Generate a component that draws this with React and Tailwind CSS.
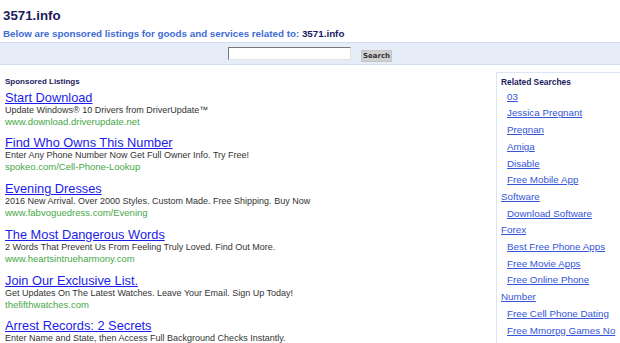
import React from 'react';

const ads = [
  {
    title: 'Start Download',
    desc: 'Update Windows® 10 Drivers from DriverUpdate™',
    url: 'www.download.driverupdate.net',
  },
  {
    title: 'Find Who Owns This Number',
    desc: 'Enter Any Phone Number Now Get Full Owner Info. Try Free!',
    url: 'spokeo.com/Cell-Phone-Lookup',
  },
  {
    title: 'Evening Dresses',
    desc: '2016 New Arrival. Over 2000 Styles. Custom Made. Free Shipping. Buy Now',
    url: 'www.fabvoguedress.com/Evening',
  },
  {
    title: 'The Most Dangerous Words',
    desc: '2 Words That Prevent Us From Feeling Truly Loved. Find Out More.',
    url: 'www.heartsintrueharmony.com',
  },
  {
    title: 'Join Our Exclusive List.',
    desc: 'Get Updates On The Latest Watches. Leave Your Email. Sign Up Today!',
    url: 'thefifthwatches.com',
  },
  {
    title: 'Arrest Records: 2 Secrets',
    desc: 'Enter Name and State, then Access Full Background Checks Instantly.',
    url: 'www.instantcheckmate.com',
  },
];

// sub = indented link, otherwise it is the wrapped tail of the line above
const related = [
  { text: '03', sub: true },
  { text: 'Jessica Pregnant', sub: true },
  { text: 'Pregnan', sub: true },
  { text: 'Amiga', sub: true },
  { text: 'Disable', sub: true },
  { text: 'Free Mobile App', sub: true },
  { text: 'Software', sub: false },
  { text: 'Download Software', sub: true },
  { text: 'Forex', sub: false },
  { text: 'Best Free Phone Apps', sub: true },
  { text: 'Free Movie Apps', sub: true },
  { text: 'Free Online Phone', sub: true },
  { text: 'Number', sub: false },
  { text: 'Free Cell Phone Dating', sub: true },
  { text: 'Free Mmorpg Games No', sub: true },
];

export default function App() {
  return (
    <div className="w-[620px] h-[343px] overflow-hidden bg-white font-['Liberation_Sans',Arial,sans-serif]">
      {/* Header */}
      <div className="pt-[8px] pl-[3px]">
        <h1 className="text-[13.3px] leading-[15px] font-bold text-[#1b1b5e]">3571.info</h1>
        <p className="mt-[5px] text-[9.8px] leading-[11px] font-bold text-[#3e6bd6] whitespace-nowrap">
          Below are sponsored listings for goods and services related to:{' '}
          <span className="text-[#1b1b5e]">3571.info</span>
        </p>
      </div>

      {/* Search bar */}
      <div className="mt-[2.5px] h-[23px] border-y border-[#d3ddf2] bg-[#e6edf9] flex items-center justify-center gap-[10px]">
        <input
          type="text"
          className="w-[123px] h-[13px] bg-white border border-t-[#7a7a7a] border-l-[#7a7a7a] border-b-[#e2e2e2] border-r-[#e2e2e2] outline-none"
        />
        <button className="mt-[5px] w-[31px] h-[12px] bg-[#d0d0d0] border border-[#c4c4c4] text-[7px] leading-[10px] font-bold text-[#333] font-['DejaVu_Sans',sans-serif]">
          Search
        </button>
      </div>

      {/* Body */}
      <div className="mt-[7px] flex">
        <div className="flex-1 pl-[5px] pt-[5px]">
          <h2 className="text-[8px] leading-[10px] font-bold text-[#1b1b5e] mb-[3px]">Sponsored Listings</h2>
          {ads.map((ad) => (
            <div key={ad.title} className="mb-[8.8px] whitespace-nowrap">
              <a href="#" className="block text-[12.8px] leading-[15px] text-[#1c1cea] underline">
                {ad.title}
              </a>
              <div className="text-[9px] leading-[11px] text-[#333]">{ad.desc}</div>
              <div className="text-[9.5px] leading-[11px] text-[#47a847]">{ad.url}</div>
            </div>
          ))}
        </div>

        <div className="w-[124px] shrink-0 border border-r-0 border-[#dce5f6] pl-[4px] pt-[4px] h-[300px]">
          <h2 className="text-[8.4px] leading-[10px] font-bold text-[#1b1b5e] mb-[2.2px]">Related Searches</h2>
          <ul>
            {related.map((r) => (
              <li
                key={r.text}
                className={r.sub ? 'pl-[6px] text-[9.8px] leading-[16.7px] whitespace-nowrap' : 'text-[9.8px] leading-[16.7px] whitespace-nowrap'}
              >
                <a href="#" className="text-[#3556d8] underline">
                  {r.text}
                </a>
              </li>
            ))}
          </ul>
        </div>
      </div>
    </div>
  );
}
